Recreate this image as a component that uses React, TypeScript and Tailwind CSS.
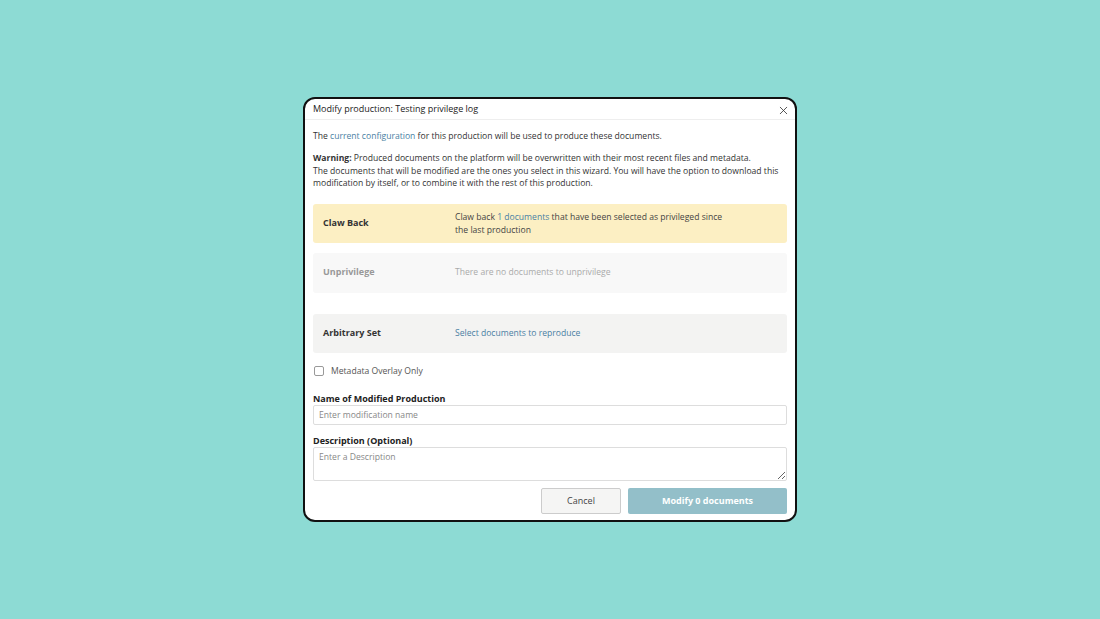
import { X } from 'lucide-react';

const font = { fontFamily: '"Open Sans", "Noto Sans", sans-serif' };

function OptionRow({
  label,
  children,
  className,
  labelClass,
}: {
  label: string;
  children: React.ReactNode;
  className: string;
  labelClass: string;
}) {
  return (
    <div className={`flex items-center rounded-[3px] px-[10px] ${className}`}>
      <div className={`w-[132px] shrink-0 text-[9px] font-bold ${labelClass}`}>{label}</div>
      <div className="text-[8.6px] leading-[12.5px]">{children}</div>
    </div>
  );
}

export default function App() {
  return (
    <div
      className="flex h-[619px] w-[1100px] items-start justify-center bg-[#8ddbd4] pt-[97px] text-[#333]"
      style={font}
    >
      <div className="flex h-[425px] w-[494px] flex-col overflow-hidden rounded-[12px] border-2 border-[#111] bg-white">
        <div className="flex h-[21px] shrink-0 items-center justify-between border-b border-[#eee] pl-[8px] pr-[5px]">
          <span className="text-[9px] text-[#222]">Modify production: Testing privilege log</span>
          <X size={13} strokeWidth={1.5} className="mt-[2px] text-[#333]" />
        </div>

        <div className="flex flex-col px-[8px] pt-[10px] text-[8.6px] leading-[12.5px]">
          <p>
            The <span className="text-[#4a7fa3]">current configuration</span> for this production will be used to
            produce these documents.
          </p>
          <p className="mt-[9.5px]">
            <span className="font-bold">Warning:</span> Produced documents on the platform will be overwritten with
            their most recent files and metadata.
            <br />
            The documents that will be modified are the ones you select in this wizard. You will have the option to
            download this modification by itself, or to combine it with the rest of this production.
          </p>

          <OptionRow
            label="Claw Back"
            className="mt-[14px] h-[39px] bg-[#fcefc3]"
            labelClass="text-[#333]"
          >
            <span className="block w-[280px] pt-[1px] text-[#444]">
              Claw back <span className="text-[#4a7fa3]">1 documents</span> that have been selected as privileged
              since the last production
            </span>
          </OptionRow>

          <OptionRow
            label="Unprivilege"
            className="mt-[10px] h-[40px] bg-[#f8f8f8]"
            labelClass="text-[#999]"
          >
            <span className="text-[#aaa]">There are no documents to unprivilege</span>
          </OptionRow>

          <OptionRow
            label="Arbitrary Set"
            className="mt-[21px] h-[39px] bg-[#f3f3f2]"
            labelClass="text-[#333]"
          >
            <span className="text-[#4a7fa3]">Select documents to reproduce</span>
          </OptionRow>

          <label className="mt-[12px] flex items-center gap-[7px] pl-[1px]">
            <span className="h-[10px] w-[10px] rounded-[2px] border border-[#999] bg-white" />
            <span className="text-[#555]">Metadata Overlay Only</span>
          </label>

          <div className="mt-[16px] text-[9px] font-bold leading-[12px] text-[#222]">Name of Modified Production</div>
          <input
            className="block h-[20px] w-full rounded-[2px] border border-[#ddd] px-[5px] text-[8.6px] outline-none placeholder:text-[#888]"
            placeholder="Enter modification name"
          />

          <div className="mt-[10px] text-[9px] font-bold leading-[12px] text-[#222]">Description (Optional)</div>
          <textarea
            className="block h-[34px] w-full resize-y rounded-[2px] border border-[#ddd] px-[5px] py-[3px] text-[8.6px] leading-[12px] outline-none placeholder:text-[#888]"
            placeholder="Enter a Description"
          />

          <div className="mt-[7px] flex justify-end gap-[7px]">
            <button className="h-[26px] w-[80px] rounded-[2px] border border-[#ccc] bg-[#f5f5f4] text-[9px] text-[#444]">
              Cancel
            </button>
            <button className="h-[26px] w-[159px] rounded-[2px] bg-[#93bfc9] text-[9px] font-bold text-white">
              Modify 0 documents
            </button>
          </div>
        </div>
      </div>
    </div>
  );
}
